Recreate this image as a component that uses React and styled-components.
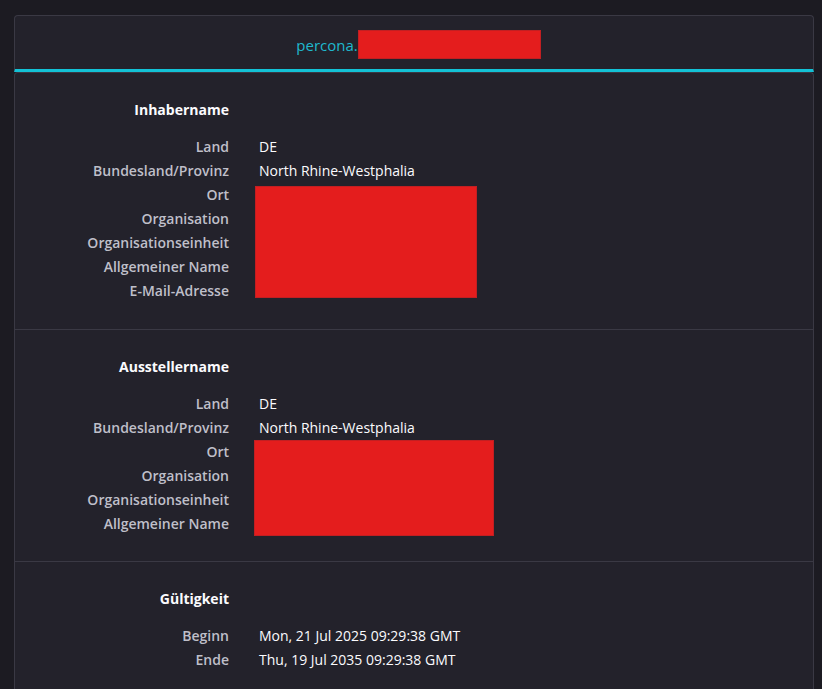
import React from "react";
import styled, { createGlobalStyle } from "styled-components";

const GlobalStyle = createGlobalStyle`
  html, body {
    margin: 0;
    background: #1c1b22;
  }
  body {
    font-family: "Open Sans", "Noto Sans", sans-serif;
    font-size: 14px;
    color: #fbfbfe;
  }
`;

const sections = [
  {
    title: "Inhabername",
    rows: [
      ["Land", "DE"],
      ["Bundesland/Provinz", "North Rhine-Westphalia"],
    ],
    hidden: ["Ort", "Organisation", "Organisationseinheit", "Allgemeiner Name", "E-Mail-Adresse"],
    box: { top: 3, left: -4, width: 222, height: 112 },
  },
  {
    title: "Ausstellername",
    rows: [
      ["Land", "DE"],
      ["Bundesland/Provinz", "North Rhine-Westphalia"],
    ],
    hidden: ["Ort", "Organisation", "Organisationseinheit", "Allgemeiner Name"],
    box: { top: 0, left: -5, width: 240, height: 96 },
  },
  {
    title: "Gültigkeit",
    rows: [
      ["Beginn", "Mon, 21 Jul 2025 09:29:38 GMT"],
      ["Ende", "Thu, 19 Jul 2035 09:29:38 GMT"],
    ],
    hidden: [],
  },
];

const App = () => {
  return (
    <Page>
      <GlobalStyle />
      <TitleBar>
        <Domain>percona.</Domain>
        <Redaction $width={183} $height={29} />
      </TitleBar>
      <Card>
        {sections.map((section) => (
          <Section key={section.title}>
            <SectionTitle>{section.title}</SectionTitle>
            <Fields>
              <Labels>
                {section.rows.map(([label]) => (
                  <Label key={label}>{label}</Label>
                ))}
                {section.hidden.map((label) => (
                  <Label key={label}>{label}</Label>
                ))}
              </Labels>
              <Values>
                {section.rows.map(([label, value]) => (
                  <Value key={label}>{value}</Value>
                ))}
                {section.box && (
                  <Redaction
                    $width={section.box.width}
                    $height={section.box.height}
                    $top={section.box.top}
                    $left={section.box.left}
                  />
                )}
              </Values>
            </Fields>
          </Section>
        ))}
      </Card>
    </Page>
  );
};

export default App;

const Page = styled.div`
  padding: 15px 8px 0 14px;
  min-height: 689px;
  box-sizing: border-box;
`;

const TitleBar = styled.div`
  box-sizing: border-box;
  height: 57px;
  display: flex;
  align-items: center;
  justify-content: center;
  padding: 4px 0 0 9px;
  background: #23222b;
  border: 1px solid #3a3944;
  border-bottom: 3px solid #13c2d6;
  border-radius: 4px 4px 0 0;
`;

const Domain = styled.span`
  font-size: 15px;
  color: #1fb8ce;
`;

const Redaction = styled.div`
  flex: none;
  width: ${(p) => p.$width}px;
  height: ${(p) => p.$height}px;
  margin-top: ${(p) => p.$top || 0}px;
  margin-left: ${(p) => p.$left || 0}px;
  background: #e41d1d;
  box-shadow: inset 0 0 0 1px #c21f22;
`;

const Card = styled.div`
  background: #23222b;
  border: 1px solid #3a3944;
  border-bottom: none;
  border-radius: 4px 4px 0 0;
  min-height: 640px;
`;

const Section = styled.div`
  padding: 25px 0 25px;

  &:first-child {
    padding-bottom: 26px;
  }

  & + & {
    border-top: 1px solid #3a3944;
  }
`;

const SectionTitle = styled.div`
  width: 214px;
  text-align: right;
  line-height: 24px;
  font-weight: 700;
  color: #fbfbfe;
  margin-bottom: 13px;
`;

const Fields = styled.div`
  display: flex;
  gap: 30px;
`;

const Labels = styled.div`
  width: 214px;
  display: flex;
  flex-direction: column;
  align-items: flex-end;
`;

const Label = styled.div`
  line-height: 24px;
  font-weight: 600;
  color: #bfbfc9;
  white-space: nowrap;
`;

const Values = styled.div`
  display: flex;
  flex-direction: column;
  align-items: flex-start;
`;

const Value = styled.div`
  line-height: 24px;
  color: #fbfbfe;
  white-space: nowrap;
`;
